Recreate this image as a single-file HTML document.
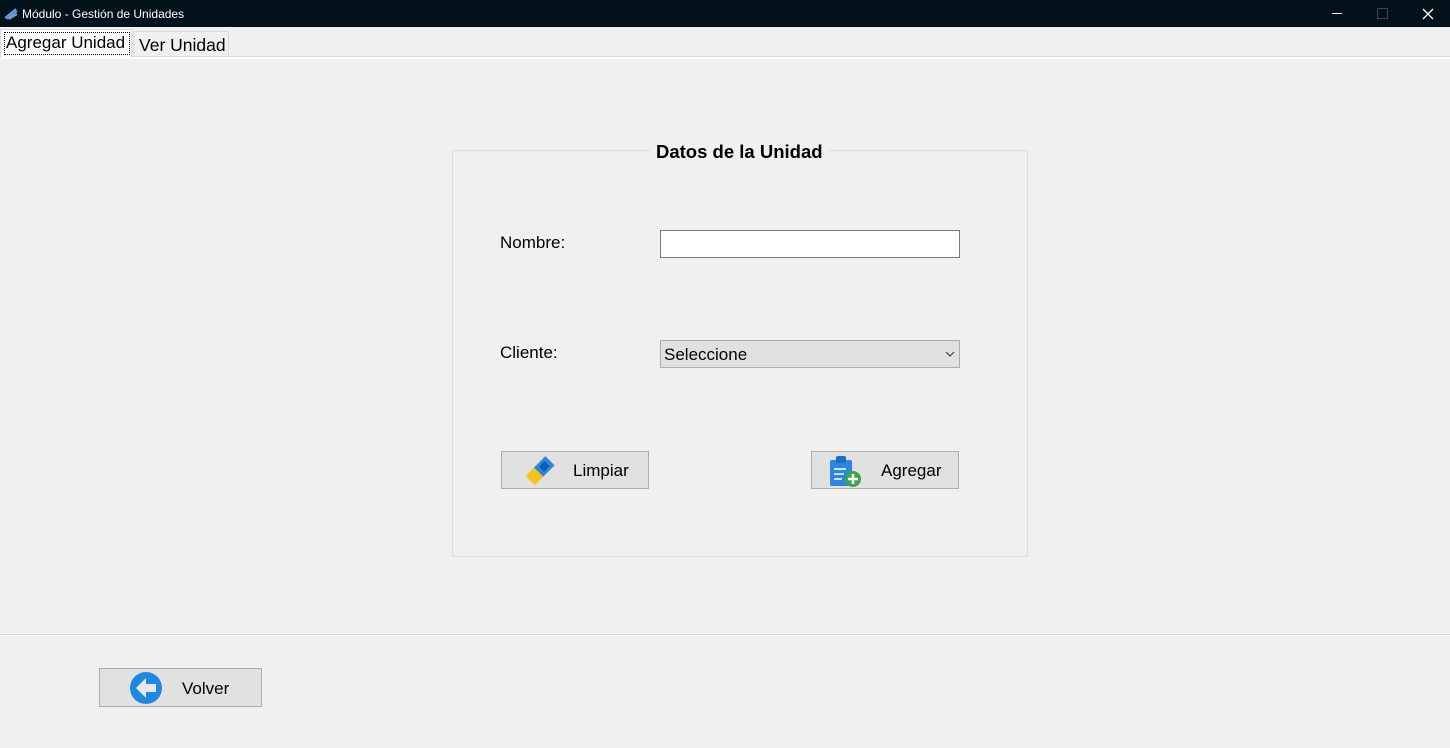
<!DOCTYPE html>
<html><head><style>
body{margin:0;width:1450px;height:748px;background:#f0f0f0;font-family:"Liberation Sans","DejaVu Sans",sans-serif;position:relative;overflow:hidden}
.a{position:absolute}
.title{left:0;top:0;width:1450px;height:27px;background:#03121a;color:#fff;font-size:12px}
.btn{background:#e1e1e1;border:1px solid #adadad;box-sizing:border-box;font-size:17px;color:#000}
</style></head><body>
<div class="a title">
 <svg class="a" style="left:4px;top:7px" width="14" height="13"><path d="M1 11 L12 2 M3 12 L13 4 M5 12 L13 7" stroke="#6aa0d8" stroke-width="2"/></svg>
 <span class="a" style="left:22px;top:7px">Módulo - Gestión de Unidades</span>
 <div class="a" style="left:1332px;top:13px;width:10px;height:1px;background:#fff"></div>
 <div class="a" style="left:1377px;top:8px;width:9px;height:9px;border:1px solid #445"></div>
 <svg class="a" style="left:1422px;top:8px" width="12" height="12"><path d="M1 1L11 11M11 1L1 11" stroke="#fff" stroke-width="1.3"/></svg>
</div>
<div class="a" style="left:0;top:56px;width:1450px;height:2px;background:#fff;border-top:1px solid #d9d9d9"></div>
<div class="a" style="left:0;top:29px;width:132px;height:29px;background:#fff;border:1px solid #d9d9d9;border-bottom:none;box-sizing:border-box"></div>
<div class="a" style="left:4px;top:32px;width:126px;height:23px;border:1px dotted #000;box-sizing:border-box"></div>
<span class="a" style="left:6px;top:33px;font-size:17px">Agregar Unidad</span>
<div class="a" style="left:133px;top:31px;width:96px;height:25px;background:#f0f0f0;border:1px solid #d9d9d9;border-bottom:none;box-sizing:border-box"></div>
<span class="a" style="left:139px;top:35px;font-size:17.5px">Ver Unidad</span>

<div class="a" style="left:452px;top:150px;width:576px;height:407px;border:1px solid #dcdcdc;box-sizing:border-box"></div>
<span class="a" style="left:650px;top:141px;background:#f0f0f0;padding:0 6px;font-size:18.5px;font-weight:bold">Datos de la Unidad</span>
<span class="a" style="left:500px;top:233px;font-size:17px">Nombre:</span>
<div class="a" style="left:660px;top:230px;width:300px;height:28px;background:#fff;border:1px solid #7a7a7a;box-sizing:border-box"></div>
<span class="a" style="left:500px;top:343px;font-size:17px">Cliente:</span>
<div class="a btn" style="left:660px;top:340px;width:300px;height:28px"><span class="a" style="left:3px;top:4px">Seleccione</span>
<svg class="a" style="left:284px;top:10px" width="10" height="6"><path d="M1 1L5 5L9 1" stroke="#333" fill="none"/></svg></div>

<div class="a btn" style="left:501px;top:451px;width:148px;height:38px">
 <svg class="a" style="left:20px;top:4px" width="34" height="30"><g transform="rotate(-45 17 15)"><rect x="4" y="9" width="13" height="13" fill="#f6c21c"/><rect x="16" y="9" width="16" height="13" fill="#2b86e0"/><rect x="20" y="12" width="8" height="7" fill="#0d5db0"/></g></svg>
 <span class="a" style="left:71px;top:9px">Limpiar</span></div>
<div class="a btn" style="left:811px;top:451px;width:148px;height:38px">
 <svg class="a" style="left:16px;top:3px" width="36" height="32"><rect x="2" y="5" width="22" height="26" rx="2" fill="#2b86e0"/><rect x="8" y="1" width="10" height="7" rx="2" fill="#1a6fc4"/><path d="M6 14h12M6 19h10M6 24h8" stroke="#cfe3f7" stroke-width="2"/><circle cx="25" cy="24" r="8" fill="#3aa54a"/><path d="M25 19v10M20 24h10" stroke="#fff" stroke-width="2.5"/></svg>
 <span class="a" style="left:69px;top:9px">Agregar</span></div>

<div class="a" style="left:0;top:634px;width:1450px;height:1px;background:#d9d9d9"></div>
<div class="a" style="left:0;top:635px;width:1450px;height:1px;background:#fff"></div>
<div class="a btn" style="left:99px;top:668px;width:163px;height:39px">
 <svg class="a" style="left:30px;top:3px" width="32" height="32"><circle cx="16" cy="16" r="16" fill="#1e88e5"/><path d="M16 6v6h10v8H16v6L6 16z" fill="#e8e8e8"/></svg>
 <span class="a" style="left:82px;top:10px">Volver</span></div>
</body></html>
